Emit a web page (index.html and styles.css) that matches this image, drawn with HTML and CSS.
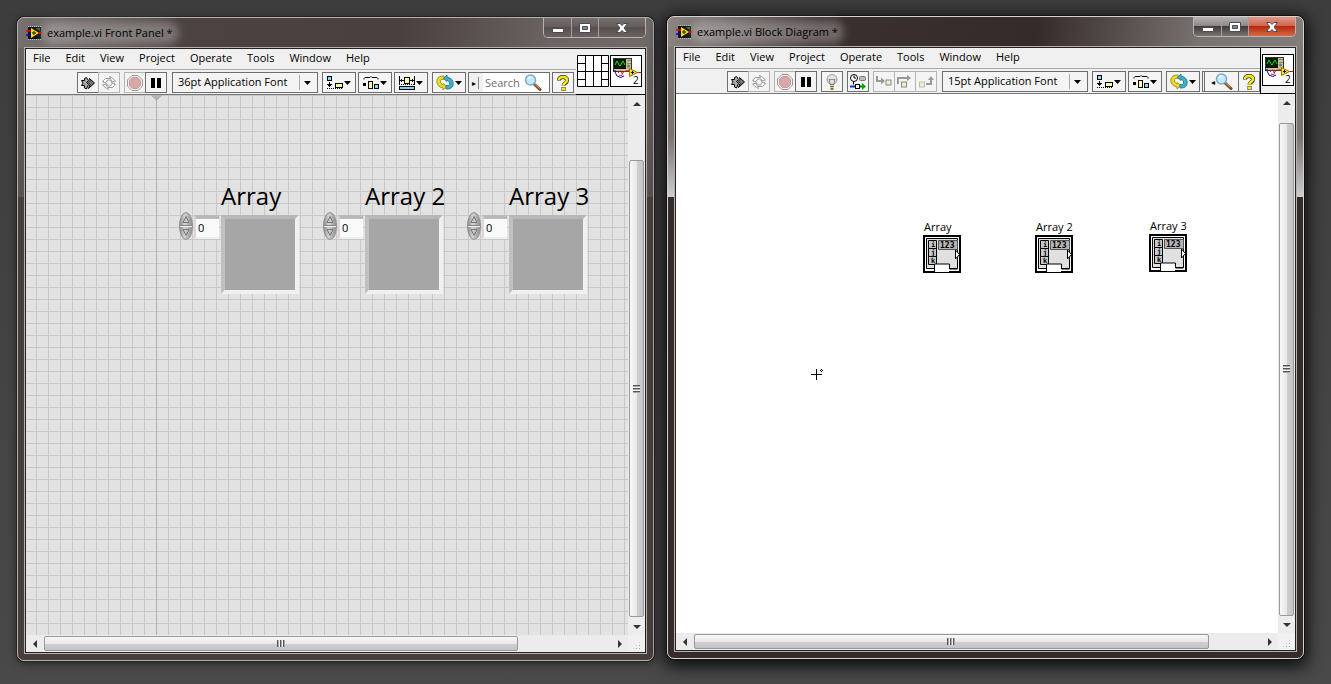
FILE: index.html
```
<!DOCTYPE html>
<html lang="en">

<head>
    <meta charset="utf-8">
    <meta name="viewport" content="width=device-width, initial-scale=1">
    <title>example.vi</title>
    <link rel="stylesheet" href="styles.css">
</head>

<body>
    <!-- shared icons -->
    <svg class="sprite" aria-hidden="true">
        <symbol id="vi-small" viewBox="0 0 16 14">
            <rect x="2" y="1" width="13" height="12" fill="#111" />
            <path d="M2 .5h13M2 13.5h13" stroke="#bbb" stroke-dasharray="1 1" />
            <path d="M5 2l8 5-8 5z" fill="#ffe100" />
            <path d="M9 2h5v3z" fill="#1c7a1c" />
            <path d="M6 7h4M8 5v4" stroke="#111" />
            <path d="M0 5h5M12 7h4" stroke="#e00" stroke-width="1.5" />
            <path d="M0 9h5" stroke="#00e" stroke-width="1.5" />
        </symbol>
        <symbol id="run" viewBox="0 0 14 14">
            <path d="M.5 4.500h3v-2l2-1 2 3-2 2 2 2-2 4.500-2-1v-2.500h-3l1.500-2.500z" fill="#aaa" stroke="#000" />
            <path d="M8.500 2.500l5 4.500-6 5.500 1.500-4-2-2 2-2z" fill="#777" stroke="#000" />
        </symbol>
        <symbol id="run-loop" viewBox="0 0 16 14">
            <path d="M2.500 6.500v-2l2-2h5l-1-2 2 1 4 3.500-4.500 1 .5-2h-4l-1.500 2.500z" fill="#fff" stroke="#999" />
            <path d="M13.500 7.500v2l-2 2h-5l1 2-2-1-4-3.500 4.500-1-.5 2h4l1.500-2.500z" fill="#fff" stroke="#999" />
            <path d="M1 5l5 3M10 6l5 3" stroke="#aaa" />
        </symbol>
        <symbol id="abort" viewBox="0 0 16 16">
            <path d="M5 .5h6L15.5 5v6L11 15.500H5L.5 11V5z" fill="#f4f0f0" stroke="#999" />
            <path d="M5.500 2.500h5l3 3v5l-3 3h-5l-3-3v-5z" fill="#d8a8a8" stroke="#c89c9c" />
        </symbol>
        <symbol id="pause" viewBox="0 0 10 10">
            <path d="M0 0h4v10H0zM6 0h4v10H6z" />
        </symbol>
        <symbol id="bulb" viewBox="0 0 12 16">
            <circle cx="6" cy="5.5" r="5" fill="#e4e4e4" stroke="#999" />
            <path d="M4 10L3 5l2 1 1-1 1 1 2-1-1 5" fill="none" stroke="#888" />
            <path d="M4 10h4v4l-1 2H5l-1-2z" fill="#8c7440" />
            <path d="M4 11.5h4M4 13.5h4" stroke="#d8d0b0" />
        </symbol>
        <symbol id="retain" viewBox="0 0 16 16">
            <circle cx="4" cy="4" r="3.5" fill="#fff" stroke="#000" />
            <path d="M4 1.5V4h2M3.5 7.5v3" fill="none" stroke="#000" />
            <rect x="9.5" y="2.5" width="6" height="4" rx="1" fill="#bbb" stroke="#777" />
            <path d="M0 12.5h5" stroke="#0030f0" stroke-width="2" />
            <rect x="5.5" y="10.5" width="4" height="4" fill="#fff" stroke="#000" />
            <path d="M10 12.5h3" stroke="#080" stroke-width="2" />
            <path d="M12 9l4 3.5-4 3.5z" fill="#0a0" />
        </symbol>
        <symbol id="step-into" viewBox="0 0 16 12">
            <path d="M1 0v5h5" fill="none" stroke="#999" stroke-width="2" />
            <path d="M5 1.500v7l4-3.500z" fill="#999" />
            <rect x="10" y="4" width="5" height="5" fill="#f0f0cc" stroke="#888" />
        </symbol>
        <symbol id="step-over" viewBox="0 0 16 12">
            <path d="M1 8V2h10" fill="none" stroke="#999" stroke-width="2" />
            <path d="M10-1v6l4-3z" fill="#999" />
            <rect x="4.5" y="6" width="5" height="5" fill="#f0f0cc" stroke="#888" />
        </symbol>
        <symbol id="step-out" viewBox="0 0 16 12">
            <path d="M8 8h5V4" fill="none" stroke="#999" stroke-width="2" />
            <path d="M10 4h6l-3-4z" fill="#999" />
            <rect x="1.5" y="6" width="5" height="5" fill="#f0f0cc" stroke="#bbb" />
        </symbol>
        <symbol id="align" viewBox="0 0 16 14">
            <rect x=".5" y=".5" width="4" height="4" fill="#7fe0f8" stroke="#000" />
            <path d="M2.5 6v5M0 8.5h5M1 9.5h3" stroke="#000" />
            <path d="M0 12.5h15" stroke="#000" stroke-dasharray="1 1" />
            <rect x="8.5" y="7.5" width="7" height="4" fill="#ffffa0" stroke="#000" />
        </symbol>
        <symbol id="distribute" viewBox="0 0 16 14">
            <path d="M1 3.5V2.5l1-1h5L8 .5l1 1h5l1 1v1" fill="none" stroke="#000" />
            <path d="M0 7h3v3H0z" />
            <rect x="5.5" y="5.5" width="4" height="7" fill="#ffffa0" stroke="#000" />
            <rect x="11.5" y="8.5" width="4" height="4" fill="#7fe0f8" stroke="#000" />
        </symbol>
        <symbol id="resize" viewBox="0 0 16 14">
            <path d="M.5 0v9M15.5 0v9M1 4.500h4M11 4.500h4M2.500 3v3M13.500 3v3" stroke="#000" />
            <rect x="5.5" y="1.5" width="5" height="6" fill="#ffffa0" stroke="#000" />
            <path d="M0 8.500h16" stroke="#000" stroke-dasharray="1 1" />
            <rect x=".5" y="10.5" width="15" height="3" fill="#7fd0f0" stroke="#000" />
        </symbol>
        <symbol id="reorder" viewBox="0 0 18 16">
            <path d="M8 1.5Q1 1 .8 7q0 5 6.200 6.500V15.500L11 12 7 9v1.500Q3.500 9 4.500 6 5.500 4 8 5z" fill="#e6dc28" stroke="#a39a22" />
            <path d="M10 14.5Q17 15 17.200 9q0-5-6.200-6.500V.5L7.500 4 11 7V5.500Q14.500 7 13.500 10 12.500 12 10 11z" fill="#3fb0cc" stroke="#2a8294" />
        </symbol>
        <symbol id="magnifier" viewBox="0 0 18 17">
            <path d="M10 10l6 5.5" stroke="#7a4a2a" stroke-width="3" stroke-linecap="round" />
            <path d="M10.5 10l5 4.5" stroke="#d9a070" />
            <circle cx="6.5" cy="6" r="5" fill="#c4eaff" stroke="#7fa8cc" stroke-width="1.5" />
            <path d="M4 5q1-2 3-2" fill="none" stroke="#fff" stroke-width="1.5" />
        </symbol>
        <symbol id="help" viewBox="0 0 12 16">
            <path d="M2 5.500Q2 2 6 2t4 3.500q0 1.500-2 3-1.500 1-1.500 2" fill="none" stroke="#333" stroke-width="4" />
            <path d="M4.500 12h4v4h-4z" fill="#333" />
            <path d="M2 5Q2 2 6 2t4 3q0 2-2 3-1.700 1-1.700 2.500" fill="none" stroke="#f4ea10" stroke-width="2.6" />
            <path d="M5 12.500h3v3H5z" fill="#f4ea10" />
        </symbol>
        <symbol id="drop" viewBox="0 0 7 4">
            <path d="M0 0h7L3.5 4z" />
        </symbol>
        <symbol id="vi-icon" viewBox="0 0 32 32">
            <rect x=".5" y=".5" width="31" height="31" fill="#fff" stroke="#000" />
            <rect x="3.5" y="3.5" width="18" height="13" fill="#c9c29a" stroke="#333" />
            <rect x="4" y="4" width="12" height="10" fill="#001c00" />
            <path d="M5 10l2-4 2 4 1 1 3-5 2 4" fill="none" stroke="#20d820" />
            <path d="M17.5 5.500h3M17.5 8.500h3" stroke="#444" stroke-dasharray="1 1" />
            <circle cx="18.5" cy="11" r="1.5" fill="#777" />
            <path d="M5 15v2l2 4q4 3 7 0" fill="none" stroke="#0000b0" />
            <path d="M8 18q3-4 4 0t-3 2M12 19q2-4 8-3M26 17.500h5" fill="none" stroke="#e01010" />
            <path d="M19.5 13.500l8 4-8 4z" fill="#ffe820" stroke="#887700" />
            <path d="M21 17.500h3M22.500 16v3" stroke="#000" />
        </symbol>
        <symbol id="spinner" viewBox="0 0 14 28">
            <ellipse cx="7" cy="14" rx="6.5" ry="13.5" fill="url(#metal)" stroke="#909090" />
            <path d="M1 13.5h12" stroke="#888" />
            <path d="M1 14.5h12" stroke="#eee" />
            <path d="M4 10.5h6L7 4.500z" fill="#c8c8c8" stroke="#777" />
            <path d="M4 17.5h6l-3 6z" fill="#c8c8c8" stroke="#777" />
        </symbol>
        <linearGradient id="metal">
            <stop offset="0" stop-color="#8a8a8a" />
            <stop offset=".4" stop-color="#d4d4d4" />
            <stop offset="1" stop-color="#8c8c8c" />
        </linearGradient>
        <symbol id="terminal" viewBox="0 0 38 38">
            <path d="M0 0h38v38H0z" />
            <path d="M2 2h34v34H2z" fill="#fff" />
            <path d="M3.5 3.5h31v30h-31z" fill="#e0e0e0" stroke="#000" />
            <path d="M5.5 5.5h8v8h-8zM5.500 13.500h8v8h-8zM5.500 21.500h8v8h-8z" fill="#c8c8c8" stroke="#000" />
            <path d="M15.5 5.500h19v9h-19z" fill="#b4b4b4" stroke="#555" />
            <path d="M11.5 37v-8h15v5h8" fill="#fff" stroke="#000" />
            <path d="M12 30h14v7H12z" fill="#fff" />
            <path d="M32.5 15v9l4-4.500z" fill="#fff" stroke="#000" />
        </symbol>
        <symbol id="minimize" viewBox="0 0 12 10">
            <path d="M.5 5.500h11v4H.5z" fill="#fff" stroke="#4b4b55" />
        </symbol>
        <symbol id="maximize" viewBox="0 0 12 10">
            <path d="M.5.5h11v9H.5z" fill="#fff" stroke="#4b4b55" />
            <path d="M3.5 3.500h5v3h-5z" fill="#888" stroke="#4b4b55" />
        </symbol>
        <symbol id="close" viewBox="0 0 12 10">
            <path d="M.5.5h3.500l2 2 2-2h3.500L8 5l3.500 4.500H8l-2-2-2 2H.5L4 5z" fill="#fff" stroke="#4b4b55" />
        </symbol>
    </svg>

    <div class="desktop">

        <!-- front panel -->
        <section class="window window-panel">
            <header class="titlebar">
                <svg class="title-icon"><use href="#vi-small" /></svg>
                <h1 class="title">example.vi Front Panel *</h1>
                <div class="window-buttons">
                    <button class="window-button" aria-label="Minimize"><svg><use href="#minimize" /></svg></button>
                    <button class="window-button" aria-label="Maximize"><svg><use href="#maximize" /></svg></button>
                    <button class="window-button close" aria-label="Close"><svg><use href="#close" /></svg></button>
                </div>
            </header>
            <div class="client">
                <div class="top">
                    <div class="bars">
                        <nav class="menu">
                            <button>File</button>
                            <button>Edit</button>
                            <button>View</button>
                            <button>Project</button>
                            <button>Operate</button>
                            <button>Tools</button>
                            <button>Window</button>
                            <button>Help</button>
                        </nav>
                        <div class="toolbar">
                            <div class="group">
                                <button class="tool" aria-label="Run"><svg class="i14"><use href="#run" /></svg></button>
                                <button class="tool off" aria-label="Run continuously"><svg class="i16"><use href="#run-loop" /></svg></button>
                            </div>
                            <div class="group">
                                <button class="tool off" aria-label="Abort"><svg class="i16"><use href="#abort" /></svg></button>
                                <button class="tool" aria-label="Pause"><svg class="i10"><use href="#pause" /></svg></button>
                            </div>
                            <div class="font-select">
                                <select aria-label="Text settings">
                                    <option>36pt Application Font</option>
                                </select>
                                <span class="font-drop"><svg class="drop"><use href="#drop" /></svg></span>
                            </div>
                            <div class="group spaced">
                                <button class="tool wide" aria-label="Align"><svg class="i16"><use href="#align" /></svg><svg class="drop"><use href="#drop" /></svg></button>
                                <button class="tool wide" aria-label="Distribute"><svg class="i16"><use href="#distribute" /></svg><svg class="drop"><use href="#drop" /></svg></button>
                                <button class="tool wide" aria-label="Resize"><svg class="i16"><use href="#resize" /></svg><svg class="drop"><use href="#drop" /></svg></button>
                            </div>
                            <div class="group spaced">
                                <button class="tool wide" aria-label="Reorder"><svg class="i18"><use href="#reorder" /></svg><svg class="drop"><use href="#drop" /></svg></button>
                                <div class="search">
                                    <button class="search-toggle" aria-label="Collapse search">▸</button>
                                    <input type="text" placeholder="Search" aria-label="Search">
                                    <svg class="i18"><use href="#magnifier" /></svg>
                                </div>
                                <button class="tool" aria-label="Help"><svg class="i12"><use href="#help" /></svg></button>
                            </div>
                        </div>
                    </div>
                    <div class="icon-pane">
                        <svg class="pane-icon" viewBox="0 0 32 32">
                            <path d="M.5.5h31v31H.5zM8.500 0v32M16.500 0v32M24.500 0v32M0 16.500h32M0 8.500h8M0 24.500h8M24 8.500h8M24 24.500h8" fill="#fff" stroke="#000" />
                        </svg>
                        <svg class="pane-icon" viewBox="0 0 32 32">
                            <use href="#vi-icon" />
                            <text class="vi-number" x="23" y="29">2</text>
                        </svg>
                    </div>
                </div>
                <div class="workspace">
                    <main class="panel-canvas">
                        <div class="array">
                            <h2 class="array-label">Array</h2>
                            <button class="spinner" aria-label="Change index"><svg><use href="#spinner" /></svg></button>
                            <input class="index" type="text" value="0" aria-label="Array index">
                            <div class="shell"></div>
                        </div>
                        <div class="array">
                            <h2 class="array-label">Array 2</h2>
                            <button class="spinner" aria-label="Change index"><svg><use href="#spinner" /></svg></button>
                            <input class="index" type="text" value="0" aria-label="Array 2 index">
                            <div class="shell"></div>
                        </div>
                        <div class="array">
                            <h2 class="array-label">Array 3</h2>
                            <button class="spinner" aria-label="Change index"><svg><use href="#spinner" /></svg></button>
                            <input class="index" type="text" value="0" aria-label="Array 3 index">
                            <div class="shell"></div>
                        </div>
                    </main>
                    <div class="scroll vertical">
                        <i class="arrow up"></i>
                        <i class="before"></i><i class="thumb"></i><i class="after"></i>
                        <i class="arrow down"></i>
                    </div>
                    <div class="scroll horizontal">
                        <i class="arrow left"></i>
                        <i class="before"></i><i class="thumb"></i><i class="after"></i>
                        <i class="arrow right"></i>
                    </div>
                    <div class="size-grip"></div>
                </div>
            </div>
        </section>

        <!-- block diagram -->
        <section class="window window-diagram">
            <header class="titlebar">
                <svg class="title-icon"><use href="#vi-small" /></svg>
                <h1 class="title">example.vi Block Diagram *</h1>
                <div class="window-buttons">
                    <button class="window-button" aria-label="Minimize"><svg><use href="#minimize" /></svg></button>
                    <button class="window-button" aria-label="Maximize"><svg><use href="#maximize" /></svg></button>
                    <button class="window-button close" aria-label="Close"><svg><use href="#close" /></svg></button>
                </div>
            </header>
            <div class="client">
                <div class="top">
                    <div class="bars">
                        <nav class="menu">
                            <button>File</button>
                            <button>Edit</button>
                            <button>View</button>
                            <button>Project</button>
                            <button>Operate</button>
                            <button>Tools</button>
                            <button>Window</button>
                            <button>Help</button>
                        </nav>
                        <div class="toolbar">
                            <div class="group">
                                <button class="tool" aria-label="Run"><svg class="i14"><use href="#run" /></svg></button>
                                <button class="tool off" aria-label="Run continuously"><svg class="i16"><use href="#run-loop" /></svg></button>
                            </div>
                            <div class="group">
                                <button class="tool off" aria-label="Abort"><svg class="i16"><use href="#abort" /></svg></button>
                                <button class="tool" aria-label="Pause"><svg class="i10"><use href="#pause" /></svg></button>
                            </div>
                            <div class="group loose">
                                <button class="tool" aria-label="Highlight execution"><svg class="i12"><use href="#bulb" /></svg></button>
                                <button class="tool" aria-label="Retain wire values"><svg class="i16"><use href="#retain" /></svg></button>
                            </div>
                            <div class="group">
                                <button class="tool off" aria-label="Step into"><svg class="i16"><use href="#step-into" /></svg></button>
                                <button class="tool off" aria-label="Step over"><svg class="i16"><use href="#step-over" /></svg></button>
                                <button class="tool off" aria-label="Step out"><svg class="i16"><use href="#step-out" /></svg></button>
                            </div>
                            <div class="font-select">
                                <select aria-label="Text settings">
                                    <option>15pt Application Font</option>
                                </select>
                                <span class="font-drop"><svg class="drop"><use href="#drop" /></svg></span>
                            </div>
                            <div class="group spaced">
                                <button class="tool wide" aria-label="Align"><svg class="i16"><use href="#align" /></svg><svg class="drop"><use href="#drop" /></svg></button>
                                <button class="tool wide" aria-label="Distribute"><svg class="i16"><use href="#distribute" /></svg><svg class="drop"><use href="#drop" /></svg></button>
                            </div>
                            <div class="group spaced">
                                <button class="tool wide" aria-label="Reorder"><svg class="i18"><use href="#reorder" /></svg><svg class="drop"><use href="#drop" /></svg></button>
                                <div class="group">
                                    <button class="tool search-short" aria-label="Search">◂<svg class="i18"><use href="#magnifier" /></svg></button>
                                    <button class="tool" aria-label="Help"><svg class="i12"><use href="#help" /></svg></button>
                                </div>
                            </div>
                        </div>
                    </div>
                    <div class="icon-pane">
                        <svg class="pane-icon" viewBox="0 0 32 32">
                            <use href="#vi-icon" />
                            <text class="vi-number" x="23" y="29">2</text>
                        </svg>
                    </div>
                </div>
                <div class="workspace">
                    <main class="diagram-canvas">
                        <div class="node node-1">
                            <span>Array</span>
                            <svg class="terminal" viewBox="0 0 38 38">
                                <use href="#terminal" />
                                <text x="17" y="13">123</text>
                                <text class="letter" x="8" y="12">i</text>
                                <text class="letter" x="8" y="20">j</text>
                                <text class="letter" x="8" y="28">k</text>
                            </svg>
                        </div>
                        <div class="node node-2">
                            <span>Array 2</span>
                            <svg class="terminal" viewBox="0 0 38 38">
                                <use href="#terminal" />
                                <text x="17" y="13">123</text>
                                <text class="letter" x="8" y="12">i</text>
                                <text class="letter" x="8" y="20">j</text>
                                <text class="letter" x="8" y="28">k</text>
                            </svg>
                        </div>
                        <div class="node node-3">
                            <span>Array 3</span>
                            <svg class="terminal" viewBox="0 0 38 38">
                                <use href="#terminal" />
                                <text x="17" y="13">123</text>
                                <text class="letter" x="8" y="12">i</text>
                                <text class="letter" x="8" y="20">j</text>
                                <text class="letter" x="8" y="28">k</text>
                            </svg>
                        </div>
                        <svg class="cursor" viewBox="0 0 14 14">
                            <path d="M5.5 1v11M0 6.500h11M9 2.500h1M11 2.500h1M10 1.500h1M10 3.500h1" stroke="#000" />
                        </svg>
                    </main>
                    <div class="scroll vertical">
                        <i class="arrow up"></i>
                        <i class="before"></i><i class="thumb"></i><i class="after"></i>
                        <i class="arrow down"></i>
                    </div>
                    <div class="scroll horizontal">
                        <i class="arrow left"></i>
                        <i class="before"></i><i class="thumb"></i><i class="after"></i>
                        <i class="arrow right"></i>
                    </div>
                    <div class="size-grip"></div>
                </div>
            </div>
        </section>
    </div>
</body>

</html>
```
FILE: styles.css
```
* {
    box-sizing: border-box;
}

body {
    margin: 0;
    background: linear-gradient(#3d3d3d, #494949);
    color: #000;
    font-family: "Open Sans", "Noto Sans", sans-serif;
    font-size: 11px;
}

button,
input,
select {
    margin: 0;
    padding: 0;
    border: 0;
    border-radius: 0;
    background: none;
    color: inherit;
    font: inherit;
}

h1,
h2 {
    margin: 0;
    font-weight: normal;
}

.sprite {
    position: absolute;
    width: 0;
    height: 0;
}

.desktop {
    display: flex;
    gap: 13px;
    min-height: 100vh;
    padding: 16px 27px 23px 17px;
}

/* Window frame */
.window {
    display: flex;
    flex: 1;
    flex-direction: column;
    min-width: 0;
    padding: 0 6px 6px;
    border: 1px solid #b5b2b0;
    border-radius: 7px;
}

.window-panel {
    margin-top: 1px;
    background:
        linear-gradient(100deg, #777170, #4c4341 24%, #4a403e 60%, #6b6462 84%, #6f6967) top / 100% 30px no-repeat,
        linear-gradient(#716a69, #5a5250 179px, #483f3d 179px);
    box-shadow: 0 0 0 1px #222, 0 2px 10px #0008;
}

.window-diagram {
    margin-bottom: 2px;
    border-color: #d5d3d2;
    background:
        linear-gradient(100deg, #8b8684, #3b302f 24%, #352b2a 58%, #797371 84%, #827d7b) top / 100% 30px no-repeat,
        linear-gradient(#827b7a, #7a7371 120px, #cecece 180px, #352b2a 180px);
    box-shadow: 0 0 0 1px #111, 0 4px 16px 4px #000c;
}

.titlebar {
    display: flex;
    align-items: flex-start;
    height: 29px;
    padding: 0 1px 0 2px;
}

.title-icon {
    width: 16px;
    height: 14px;
    margin-top: 8px;
}

/* Soft glow behind the caption */
.title {
    margin: 9px 0 0 5px;
    border-radius: 6px;
    background: #fff4;
    box-shadow: 0 0 8px 6px #fff4;
    font-size: 11px;
    line-height: 12px;
}

.window-buttons {
    display: flex;
    margin-left: auto;
    border: 1px solid #b8b4b2;
    border-top: 0;
    border-radius: 0 0 5px 5px;
    overflow: hidden;
}

.window-button {
    display: grid;
    place-items: center;
    width: 27px;
    height: 19px;
    border-left: 1px solid #a5a09e;
    background: linear-gradient(#75706e, #625b59 50%, #574f4d 50%, #6a6361);
}

.window-button:first-child {
    border-left: 0;
}

.window-button.close {
    width: 47px;
}

.window-button svg {
    width: 12px;
    height: 10px;
}

.window-diagram .window-button {
    background: linear-gradient(#b5b1b0, #8a8583 50%, #443b39 50%, #7a7371);
}

.window-diagram .window-button.close {
    background: linear-gradient(#e09a88, #d0604a 50%, #b42a10 50%, #d86a40);
}

.client {
    display: flex;
    flex: 1;
    flex-direction: column;
    margin: 1px;
    border: 1px solid #222;
    outline: 1px solid #b5b2b0;
}

/* Menu, toolbar and icon pane */
.top {
    display: flex;
    background: #f0f0f0;
}

.bars {
    flex: 1;
    min-width: 0;
    border-bottom: 1px solid #777;
}

.menu {
    display: flex;
    gap: 1px;
    height: 21px;
    border-bottom: 1px solid #a8a8a8;
}

.menu button {
    padding: 0 7px 4px;
}

.toolbar {
    display: flex;
    gap: 4px;
    height: 24px;
    padding: 2px 0 0 51px;
}

.group {
    display: flex;
}

.group.spaced {
    gap: 2px;
}

.group.loose {
    gap: 4px;
}

.tool {
    display: flex;
    align-items: center;
    justify-content: center;
    width: 22px;
    height: 21px;
    border: 1px solid #6e6e6e;
    background: #f4f4f4;
}

.tool + .tool {
    margin-left: -1px;
}

.spaced > .tool + .tool,
.loose > .tool + .tool {
    margin-left: 0;
}

.tool.off {
    border-color: #b4b4b4;
}

.tool.wide {
    gap: 1px;
    width: 34px;
}

.i10 {
    width: 10px;
    height: 10px;
}

.i12 {
    width: 12px;
    height: 16px;
}

.i14 {
    width: 14px;
    height: 14px;
}

.i16 {
    width: 16px;
    height: 16px;
}

.i18 {
    width: 18px;
    height: 17px;
}

.drop {
    width: 7px;
    height: 4px;
}

.tool svg,
.search svg {
    flex: none;
}

.font-select {
    display: grid;
    align-items: center;
    width: 146px;
    height: 21px;
    margin-left: 1px;
    border: 1px solid #6e6e6e;
    background: #f4f4f4;
}

.font-select select,
.font-drop {
    grid-area: 1 / 1;
}

.font-select select {
    height: 19px;
    padding: 0 18px 2px 5px;
    appearance: none;
}

.font-drop {
    display: flex;
    align-items: center;
    justify-self: end;
    height: 15px;
    padding: 0 6px 0 4px;
    border-left: 1px solid #aaa;
    pointer-events: none;
}

.search {
    display: flex;
    align-items: center;
    width: 82px;
    height: 21px;
    padding-right: 7px;
    border: 1px solid #6e6e6e;
    background: linear-gradient(90deg, #f0f0f0 14px, #fff 14px);
}

.search-toggle {
    width: 10px;
    border-right: 1px solid #888;
    font-size: 8px;
    line-height: 12px;
}

.search input {
    flex: 1;
    min-width: 0;
    padding-left: 6px;
}

.search input::placeholder {
    color: #707070;
}

.search-short {
    width: 37px;
    border-left: 3px double #6e6e6e;
    font-size: 8px;
}

.icon-pane {
    display: flex;
    align-items: center;
    gap: 1px;
    padding: 0 3px 2px 1px;
    border-bottom: 1px solid #000;
}

.window-diagram .icon-pane {
    padding-right: 1px;
    border-left: 1px solid #000;
}

.pane-icon {
    width: 32px;
    height: 32px;
}

.vi-number {
    font-size: 10px;
}

/* Canvas with scroll bars */
.workspace {
    display: grid;
    flex: 1;
    grid-template: 1fr 17px / 1fr 17px;
    background: #f0f0f0;
}

/* Origin marker and axis over the alignment grid */
.panel-canvas {
    display: flex;
    align-items: flex-start;
    gap: 24px;
    padding: 85px 0 0 153px;
    overflow: hidden;
    background:
        conic-gradient(from -45deg at 50% 100%, #b4b4b4 90deg, transparent 0) 125px 0 / 11px 6px no-repeat,
        linear-gradient(#b0b0b0, #b0b0b0) 130px 0 / 1px 100% no-repeat,
        linear-gradient(90deg, #c8c8c8 1px, transparent 1px) 10px 0 / 12px 12px,
        linear-gradient(#c8c8c8 1px, transparent 1px) 0 12px / 12px 12px,
        #e2e2e2;
}

.array {
    display: grid;
    grid-template: 35px 79px / 14px 28px 78px;
}

.array-label {
    grid-column: 3;
    font-size: 24px;
    line-height: 31px;
    white-space: nowrap;
}

.spinner {
    align-self: start;
    margin-top: -3px;
}

.spinner svg {
    display: block;
    width: 14px;
    height: 28px;
}

.index {
    width: 25px;
    height: 24px;
    margin-left: 1px;
    padding: 0 0 2px 2px;
    border: 2px solid #d8d8d8;
    border-top: 4px solid #bababa;
    border-right: 0;
    border-bottom-color: #efefef;
    background: #fafafa;
}

.shell {
    border: 4px solid;
    border-color: #b8b8b8 #f0f0f0 #f0f0f0 #c0c0c0;
    background: #a6a6a6;
}

.diagram-canvas {
    position: relative;
    overflow: hidden;
    background: #fff;
}

.node {
    position: absolute;
    white-space: nowrap;
}

.node span {
    display: block;
    padding: 0 0 2px 1px;
    line-height: 12px;
}

.node-1 {
    left: 247px;
    top: 127px;
}

.node-2 {
    left: 359px;
    top: 127px;
}

.node-3 {
    left: 473px;
    top: 126px;
}

.terminal {
    display: block;
    width: 38px;
    height: 38px;
    font-family: "DejaVu Sans Mono", monospace;
    font-size: 8px;
    font-weight: bold;
}

.letter {
    font-size: 7px;
}

.cursor {
    position: absolute;
    left: 135px;
    top: 274px;
    width: 14px;
    height: 14px;
}

.scroll {
    display: flex;
    background: #ececec;
}

.vertical {
    flex-direction: column;
    padding: 0 1px;
}

.horizontal {
    padding: 1px 0;
}

.arrow {
    display: grid;
    flex: 0 0 17px;
    place-items: center;
}

.arrow::before {
    content: "";
    border: 4px solid transparent;
}

.arrow.up::before {
    border-top: 0;
    border-bottom-color: #333;
}

.arrow.down::before {
    border-bottom: 0;
    border-top-color: #333;
}

.arrow.left::before {
    border-left: 0;
    border-right-color: #333;
}

.arrow.right::before {
    border-right: 0;
    border-left-color: #333;
}

.thumb {
    display: grid;
    place-items: center;
    border: 1px solid #999;
    border-radius: 2px;
}

.vertical .thumb {
    background: linear-gradient(90deg, #f8f8f8, #e8e8e8 50%, #cfcfd1 55%, #c4c4c8);
}

.horizontal .thumb {
    background: linear-gradient(#f8f8f8, #e8e8e8 50%, #cfcfd1 55%, #c4c4c8);
}

/* Three ridges in the middle of the thumb */
.vertical .thumb::before {
    content: "";
    width: 7px;
    height: 8px;
    background: repeating-linear-gradient(#555 0 1px, #aaa 1px 2px, #f4f4f4 2px 3px);
}

.horizontal .thumb::before {
    content: "";
    width: 8px;
    height: 7px;
    background: repeating-linear-gradient(90deg, #555 0 1px, #aaa 1px 2px, #f4f4f4 2px 3px);
}

.window-panel .vertical .before {
    flex-grow: 49;
}

.window-panel .vertical .thumb {
    flex-grow: 456;
}

.window-panel .vertical .after {
    flex-grow: 1;
}

.window-panel .horizontal .before,
.window-diagram .horizontal .before {
    flex-grow: 1;
}

.window-panel .horizontal .thumb {
    flex-grow: 472;
}

.window-panel .horizontal .after {
    flex-grow: 95;
}

.window-diagram .vertical .before {
    flex-grow: 12;
}

.window-diagram .vertical .thumb {
    flex-grow: 493;
}

.window-diagram .horizontal .thumb {
    flex-grow: 514;
}

.window-diagram .horizontal .after {
    flex-grow: 53;
}

.size-grip {
    margin: 6px 4px 2px 4px;
    background: radial-gradient(#aaa 1px, transparent 1px) 0 0 / 3px 3px;
    clip-path: polygon(100% 0, 100% 100%, 0 100%);
}
```
